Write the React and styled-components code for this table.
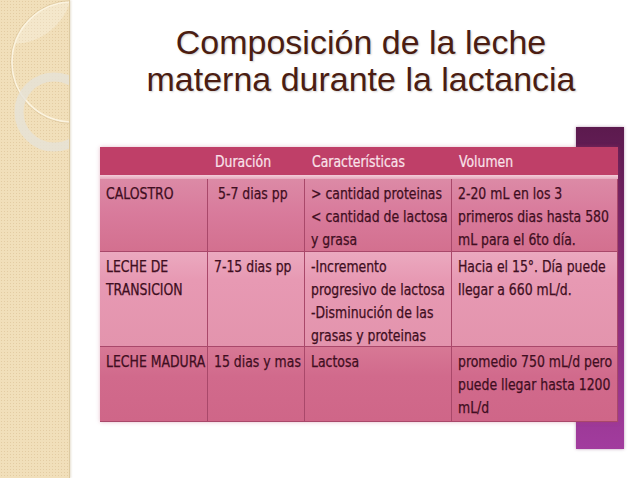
import React from 'react';
import styled, { createGlobalStyle } from 'styled-components';

const GlobalStyle = createGlobalStyle`
  html, body {
    margin: 0;
    padding: 0;
    background: #ffffff;
  }
  #root {
    width: 638px;
    height: 478px;
    overflow: hidden;
  }
`;

const Slide = styled.div`
  display: flex;
  width: 638px;
  height: 478px;
  background: #ffffff;
`;

const Sidebar = styled.div`
  position: relative;
  flex: 0 0 69px;
  height: 100%;
  overflow: hidden;
  background-color: #f1dfba;
  background-image: radial-gradient(rgba(200, 170, 120, 0.35) 0.8px, transparent 1px);
  background-size: 3px 3px;
  border-right: 1px solid #dcc9a0;
  box-shadow: 1px 0 2px rgba(180, 160, 120, 0.35);
`;

const Rings = styled.svg`
  position: absolute;
  top: 0;
  left: 0;
`;

const Main = styled.div`
  flex: 1;
  display: flex;
  flex-direction: column;
  align-items: center;
  padding: 24px 0 0 14px;
`;

const Title = styled.h1`
  margin: 0;
  font-family: 'Liberation Sans', Arial, sans-serif;
  font-weight: normal;
  font-size: 34px;
  line-height: 37px;
  color: #4b1d12;
  text-align: center;
  text-shadow: 1px 1px 2px rgba(0, 0, 0, 0.18);
`;

const TableWrap = styled.div`
  position: relative;
  margin: 49px 0 0 -4px;
  width: 518px;
`;

const PurpleBar = styled.div`
  position: absolute;
  left: 476px;
  top: -20px;
  width: 48px;
  height: 322px;
  background: linear-gradient(180deg, #5c1a4e 0%, #7d2870 40%, #a23c9e 100%);
  box-shadow: 0 0 3px rgba(90, 20, 80, 0.4);
`;

const Grid = styled.div`
  position: relative;
  display: grid;
  grid-template-columns: 108px 97px 147px 166px;
  grid-template-rows: 28px 4px 73px 95px 75px;
  box-shadow: 0 0 4px rgba(180, 60, 100, 0.35);
  font-family: 'DejaVu Sans Condensed', 'DejaVu Sans', sans-serif;
  font-size: 15.4px;
  line-height: 23px;
`;

const HeadCell = styled.div`
  background: #bf3f68;
  color: #f9e2ea;
  padding: 2px 7px 0;
  line-height: 26px;
  -webkit-text-stroke: 0.2px #f9e2ea;
`;

const Separator = styled.div`
  grid-column: 1 / -1;
  background: linear-gradient(180deg, #f3cdd9, #e6a9bd);
`;

const rowBg = {
  a: 'linear-gradient(180deg, #dc8aa6 0%, #d87a9b 50%, #d3708f 100%)',
  b: 'linear-gradient(180deg, #eba9bf 0%, #e799b3 30%, #e394ad 100%)',
  c: 'linear-gradient(180deg, #d77895 0%, #d16a8c 40%, #cf6688 100%)',
};

const Cell = styled.div`
  background: ${(p) => rowBg[p.$row]};
  color: #3f0e21;
  padding: 4px 6px 0;
  border-right: 1px solid #a9486a;
  border-bottom: 1px solid #a9486a;
  white-space: nowrap;
  -webkit-text-stroke: 0.25px #3f0e21;
  &:first-child {
    border-left: 1px solid #a9486a;
  }
`;

/* the slide font is a narrow humanist face; squeeze DejaVu Condensed to match */
const Line = styled.div`
  transform: scaleX(0.9);
  transform-origin: left center;
`;

const rows = [
  {
    row: 'a',
    cells: [
      ['CALOSTRO'],
      ['\u00a05-7 dias pp'],
      ['> cantidad proteinas', '< cantidad de lactosa', 'y grasa'],
      ['2-20 mL en los 3', 'primeros dias hasta 580', 'mL para el 6to día.'],
    ],
  },
  {
    row: 'b',
    cells: [
      ['LECHE DE', 'TRANSICION'],
      ['7-15 dias pp'],
      ['-Incremento', 'progresivo de lactosa', '-Disminución de las', 'grasas y proteinas'],
      ['Hacia el 15°. Día puede', 'llegar a 660 mL/d.'],
    ],
  },
  {
    row: 'c',
    cells: [
      ['LECHE MADURA'],
      ['15 dias y mas'],
      ['Lactosa'],
      ['promedio 750 mL/d pero', 'puede llegar hasta 1200', 'mL/d'],
    ],
  },
];

const headers = ['', 'Duración', 'Características', 'Volumen'];

const App = () => (
  <>
    <GlobalStyle />
    <Slide>
      <Sidebar>
        <Rings width="70" height="478" viewBox="0 0 70 478">
          <path d="M70 2 A60 60 0 0 0 14 44 A60 60 0 0 0 70 2 Z" fill="rgba(255,255,255,0.25)" />
          <circle cx="72" cy="62" r="60" fill="none" stroke="#fbf3df" strokeWidth="1.6" />
          <circle cx="72" cy="62" r="61.5" fill="none" stroke="rgba(190,160,110,0.35)" strokeWidth="0.8" />
          <circle cx="54" cy="112" r="35" fill="none" stroke="rgba(230,226,216,0.8)" strokeWidth="9" />
        </Rings>
      </Sidebar>
      <Main>
        <Title>
          Composición de la leche
          <br />
          materna durante la lactancia
        </Title>
        <TableWrap>
          <PurpleBar />
          <Grid>
            {headers.map((h, i) => (
              <HeadCell key={i}>
                <Line>{h}</Line>
              </HeadCell>
            ))}
            <Separator />
            {rows.map((r, ri) =>
              r.cells.map((lines, ci) => (
                <Cell key={`${ri}-${ci}`} $row={r.row}>
                  {lines.map((l, li) => (
                    <Line key={li}>{l}</Line>
                  ))}
                </Cell>
              ))
            )}
          </Grid>
        </TableWrap>
      </Main>
    </Slide>
  </>
);

export default App;
